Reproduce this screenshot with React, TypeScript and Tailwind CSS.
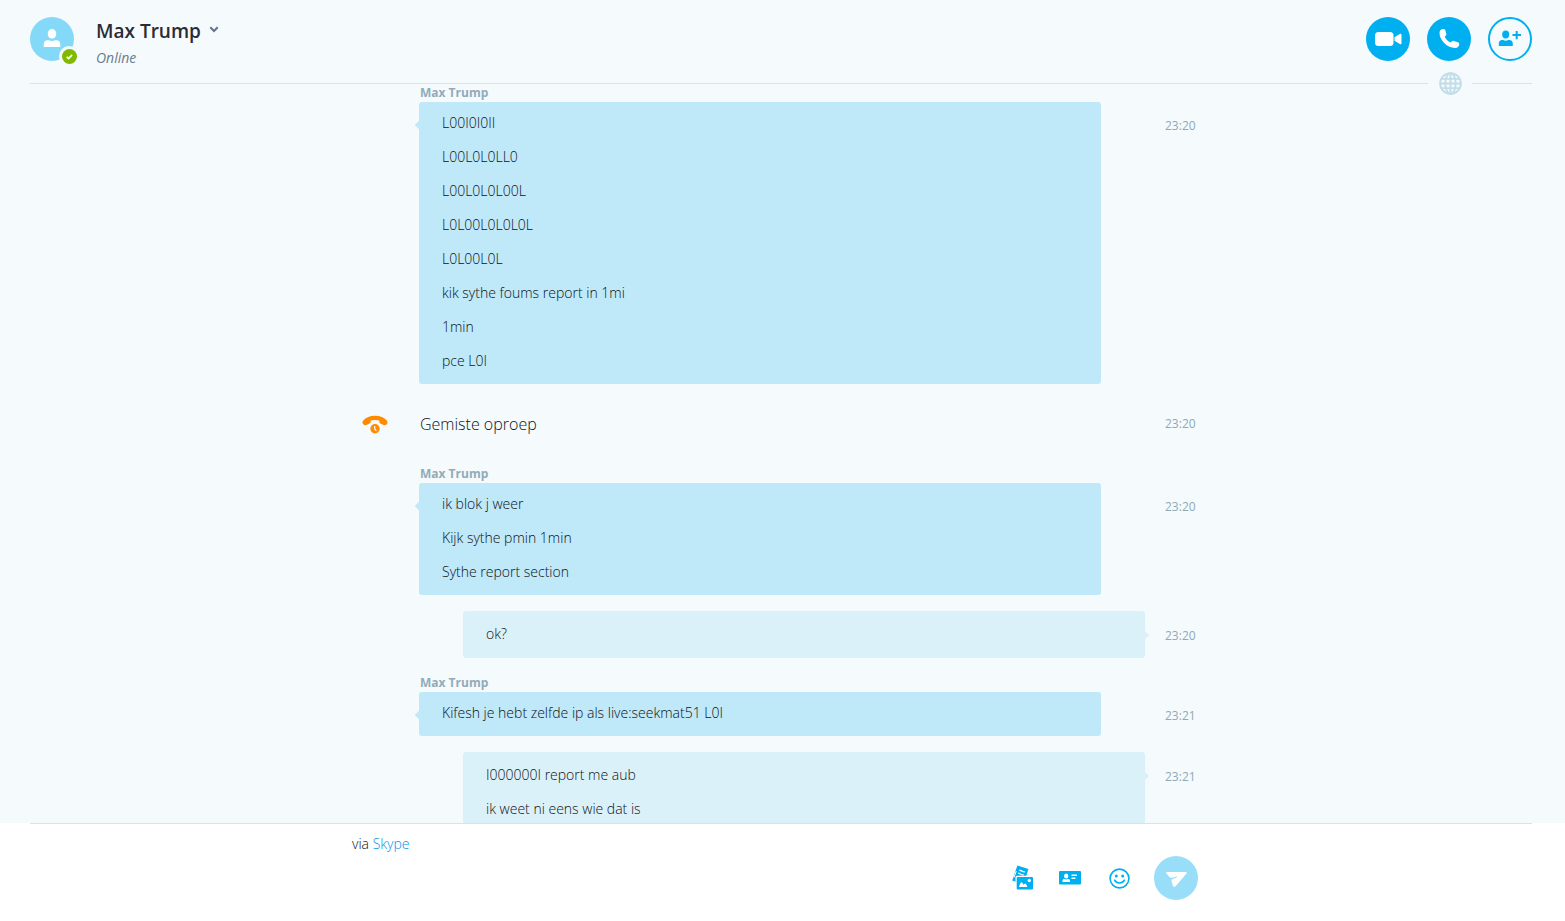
import React from "react";

type Side = "theirs" | "mine";

interface Message {
  side: Side;
  time: string;
  lines: string[];
}

const CONTACT = "Max Trump";

const firstMessages: Message[] = [
  {
    side: "theirs",
    time: "23:20",
    lines: [
      "L00I0I0II",
      "L00L0L0LL0",
      "L00L0L0L00L",
      "L0L00L0L0L0L",
      "L0L00L0L",
      "kik sythe foums report in 1mi",
      "1min",
      "pce L0I",
    ],
  },
];

const laterMessages: Message[] = [
  { side: "theirs", time: "23:20", lines: ["ik blok j weer", "Kijk sythe pmin 1min", "Sythe report section"] },
  { side: "mine", time: "23:20", lines: ["ok?"] },
  { side: "theirs", time: "23:21", lines: ["Kifesh je hebt zelfde ip als live:seekmat51 L0I"] },
  { side: "mine", time: "23:21", lines: ["I000000I report me aub", "ik weet ni eens wie dat is"] },
];

function Time({ value }: { value: string }) {
  return <time className="block w-12 shrink-0 text-xs leading-[18px] text-[#8fa9b5]">{value}</time>;
}

function MessageRow({ message }: { message: Message }) {
  if (message.side === "theirs") {
    return (
      <article>
        <h2 className="pl-[68px] text-xs leading-[18px] font-bold text-[#91acb8]">{CONTACT}</h2>
        <div className="flex items-start pl-[67px]">
          <div className="relative mr-16 min-w-0 flex-1 rounded-[3px] bg-[#bfe8f9] px-[23px] pt-1 pb-1.5 text-sm leading-[34px] font-light">
            <span className="absolute top-5 -left-[3px] size-[6px] rotate-45 bg-[#bfe8f9]" />
            {message.lines.map((line) => (
              <p key={line}>{line}</p>
            ))}
          </div>
          <div className="pt-[15px]">
            <Time value={message.time} />
          </div>
        </div>
      </article>
    );
  }
  return (
    <article className="flex items-start pl-[111px]">
      <div className="relative mr-5 min-w-0 flex-1 rounded-[3px] bg-[#dbf1fa] px-[23px] pt-1.5 pb-[7px] text-sm leading-[34px] font-light">
        <span className="absolute top-[21px] -right-[3px] size-[6px] rotate-45 bg-[#dbf1fa]" />
        {message.lines.map((line) => (
          <p key={line}>{line}</p>
        ))}
      </div>
      <div className="pt-4">
        <Time value={message.time} />
      </div>
    </article>
  );
}

function MissedCallIcon() {
  return (
    <svg width="26" height="19" viewBox="0 0 26 19" aria-hidden="true">
      <path
        d="M13 .8C8 .8 3.600 2.600 1.200 5.500.2 6.700.3 8.300 1.200 9.300c1 1.100 2.700 1.100 3.900.5l2.500-1.300c.9-.5 1.200-1.200 1.100-2.200l-.1-.8c2.700-.8 6.100-.8 8.800 0l-.1.8c-.1 1 .2 1.700 1.100 2.200l2.500 1.300c1.200.6 2.900.6 3.900-.5.9-1 1-2.600 0-3.800C22.400 2.600 18 .8 13 .8Z"
        fill="#ff8c00"
      />
      <circle cx="13" cy="13.700" r="4.700" fill="#ff8c00" />
      <path d="M12.700 10.900v3l1.600 2" fill="none" stroke="#f5fafd" strokeWidth="1.200" />
    </svg>
  );
}

function GlobeIcon() {
  return (
    <svg className="shrink-0" width="23" height="23" viewBox="0 0 24 24" fill="none" stroke="#c2dde8" strokeWidth="2" aria-hidden="true">
      <circle cx="12" cy="12" r="10.800" />
      <ellipse cx="12" cy="12" rx="5.400" ry="10.800" />
      <path d="M12 1.200v21.600M1.200 12h21.600M3 7.200h18M3 16.800h18" />
    </svg>
  );
}

export default function App() {
  return (
    <div className="flex h-screen flex-col overflow-hidden bg-[#f5fafd] font-['Open_Sans','Noto_Sans',sans-serif] text-[#0c1218]">
      <header className="shrink-0 pr-[33px] pl-[30px]">
        <div className="flex items-start justify-between pt-[17px] pb-[9px]">
          <div className="flex gap-[22px]">
            <div className="relative size-11 rounded-full bg-[#84d9f8]">
              <svg width="44" height="44" viewBox="0 0 44 44" fill="#fff" aria-hidden="true">
                <ellipse cx="22" cy="16.800" rx="4.300" ry="4.800" />
                <path d="M13.700 30v-2.300c0-2.900 1.500-4.400 4-4.400h1.200c1.900 1 4.300 1 6.200 0h1.200c2.500 0 4 1.500 4 4.400V30Z" />
              </svg>
              <svg className="absolute -right-[5px] -bottom-[5px]" width="20" height="20" viewBox="0 0 20 20" aria-hidden="true">
                <circle cx="10" cy="10" r="10" fill="#f5fafd" />
                <circle cx="10.500" cy="10.500" r="7.500" fill="#7fba00" />
                <path d="M7.700 10.800l1.900 1.700 3.500-3.700" fill="none" stroke="#fff" strokeWidth="1.700" />
              </svg>
            </div>
            <div>
              <button type="button" className="flex h-7 items-center gap-2 text-[19px] leading-7 font-semibold text-[#2b2c33]">
                {CONTACT}
                <svg className="mb-1" width="10" height="7" viewBox="0 0 10 7" fill="none" stroke="#617587" strokeWidth="2" aria-hidden="true">
                  <path d="M1.300 1.300 5 5l3.700-3.700" />
                </svg>
              </button>
              <p className="h-[29px] pt-[3px] text-sm leading-5 text-[#6b7c8a] italic">Online</p>
            </div>
          </div>
          <div className="flex gap-[17px]">
            <button type="button" aria-label="Video call" className="size-11 rounded-full bg-[#00aff0]">
              <svg width="44" height="44" viewBox="0 0 44 44" fill="#fff" aria-hidden="true">
                <rect x="9" y="15" width="18.500" height="14" rx="3.500" />
                <path d="M28.500 20.300 33.800 17c.9-.5 1.700-.1 1.700.9v8.300c0 1-.8 1.400-1.700.9l-5.300-3.300Z" />
              </svg>
            </button>
            <button type="button" aria-label="Call" className="size-11 rounded-full bg-[#00aff0]">
              <svg width="44" height="44" viewBox="0 0 44 44" fill="#fff" aria-hidden="true">
                <path d="M13 13.700c.6-1.200 2.100-1.800 3.600-1.700.9 0 1.400.5 1.700 1.300l1 3.200c.3.900 0 1.600-.6 2.200l-1 1c1 2.400 3.200 4.600 5.700 5.900l1.400-1.200c.6-.6 1.300-.8 2.100-.5l3.900 1.300c1 .3 1.500.9 1.500 1.700 0 2.200-1.500 4-4.300 4-7.600 0-15.300-7.600-15.500-14.700 0-1 .1-1.800.5-2.500Z" />
              </svg>
            </button>
            <button type="button" aria-label="Add people" className="size-11 rounded-full">
              <svg width="44" height="44" viewBox="0 0 44 44" fill="#00aff0" aria-hidden="true">
                <circle cx="22" cy="22" r="21" fill="none" stroke="#00aff0" strokeWidth="2" />
                <ellipse cx="17.700" cy="17.500" rx="3.500" ry="4" />
                <path d="M10.800 29v-2.200c0-2.400 1.300-3.700 3.400-3.700h1c1.600.8 3.500.8 5.100 0h1c2.100 0 3.500 1.300 3.500 3.700V29ZM27.700 14h2v3.100H33v2h-3.300v3.100h-2v-3.100h-3.200v-2h3.200Z" />
              </svg>
            </button>
          </div>
        </div>
        <div className="relative z-10 flex h-px items-center">
          <div className="h-px flex-1 bg-[#d3e6ee]" />
          <div className="flex h-px w-11 items-center justify-center">
            <GlobeIcon />
          </div>
          <div className="h-px w-[60px] bg-[#d3e6ee]" />
        </div>
      </header>

      <main className="min-h-0 flex-1 overflow-hidden">
        <div className="mx-auto flex w-full max-w-[861px] flex-col">
          {firstMessages.map((message, i) => (
            <MessageRow key={i} message={message} />
          ))}
          <div className="flex h-20 items-center pl-2.5">
            <MissedCallIcon />
            <p className="flex-1 pl-8 text-base font-light">Gemiste oproep</p>
            <Time value="23:20" />
          </div>
          <div className="flex flex-col gap-4 pt-px">
            {laterMessages.map((message, i) => (
              <MessageRow key={i} message={message} />
            ))}
          </div>
        </div>
      </main>

      <footer className="shrink-0 bg-white">
        <div className="mr-[33px] ml-[30px] h-px bg-[#d3e6ee]" />
        <div className="mx-auto w-full max-w-[861px] pb-[21px]">
          <p className="h-8 pt-2.5 text-sm leading-5 font-light">
            via{" "}
            <a href="#skype" className="text-[#0095f0]">
              Skype
            </a>
          </p>
          <form className="flex items-center pr-[15px]" onSubmit={(e) => e.preventDefault()}>
            <input type="text" aria-label="Message" className="h-10 min-w-0 flex-1 bg-transparent text-sm outline-none" />
            <button type="button" aria-label="Send files" className="mr-[25px]">
              <svg className="block" width="22" height="26" viewBox="0 0 22 26" aria-hidden="true">
                <path d="M5.400.500 16.400 3.900 14 12H6L3.600 16.800.2 15.600Z" fill="#00aff0" />
                <path d="M7.300 5.100c2 .2 2.800 1.900 5.600 1.700M6.200 8.200c2 .2 2.800 1.900 5.600 1.700" fill="none" stroke="#fff" strokeWidth="1.300" />
                <path d="M4.300 6.200 1.900 12.500" stroke="#fff" strokeWidth="1" />
                <rect x="3.500" y="10.700" width="18.500" height="14.800" rx="1.500" fill="#fff" />
                <rect x="4.700" y="11.900" width="16.300" height="12.600" rx="1" fill="#00aff0" />
                <path d="m6.800 22 1.900-4.200 1.300-.6 1.700 2.600 1.300-1.300 1 .5 1.500 3Z" fill="#fff" />
                <circle cx="17.300" cy="15.500" r="1.700" fill="#fff" />
              </svg>
            </button>
            <button type="button" aria-label="Send contacts" className="mr-7">
              <svg className="block" width="22" height="14" viewBox="0 0 22 14" aria-hidden="true">
                <rect width="22" height="13.500" rx="1" fill="#00aff0" />
                <ellipse cx="7.200" cy="5" rx="2.200" ry="2.500" fill="#fff" />
                <path d="M3.500 11V9.900c0-1.300.8-1.900 2-1.900 1 .5 2.400.5 3.400 0 1.300 0 2.100.6 2.100 1.900V11ZM12.500 3.500H18V5h-5.500ZM12.500 6.500h4V8h-4Z" fill="#fff" />
              </svg>
            </button>
            <button type="button" aria-label="Emoticons" className="mr-6">
              <svg className="block" width="21" height="21" viewBox="0 0 21 21" fill="none" stroke="#00aff0" aria-hidden="true">
                <circle cx="10.500" cy="10.500" r="9.400" strokeWidth="1.600" />
                <circle cx="7.300" cy="8" r="1.500" fill="#00aff0" stroke="none" />
                <circle cx="13.700" cy="8" r="1.500" fill="#00aff0" stroke="none" />
                <path d="M5.700 12.200c1.900 3.700 7.700 3.700 9.600 0" strokeWidth="1.600" strokeLinecap="round" />
              </svg>
            </button>
            <button type="submit" aria-label="Send message" className="size-11 rounded-full bg-[#99def9]">
              <svg className="block" width="44" height="44" viewBox="0 0 44 44" fill="#fff" aria-hidden="true">
                <path d="M13.200 16h18.600c1 0 1.300.8.7 1.600L21.600 30.200c-.8.900-2.300.8-2.800-.4l-1.300-4.900c-.3-1 .2-1.700 1-2.100l4.200-1.800-5.500.7c-.8.1-1.300-.2-1.800-.8l-3.200-3.600c-.6-.7-.1-1.300 1-1.300Z" />
                <path d="m17.700 23.300 5.200-2.600" fill="none" stroke="#99def9" strokeWidth="1" />
              </svg>
            </button>
          </form>
        </div>
      </footer>
    </div>
  );
}
